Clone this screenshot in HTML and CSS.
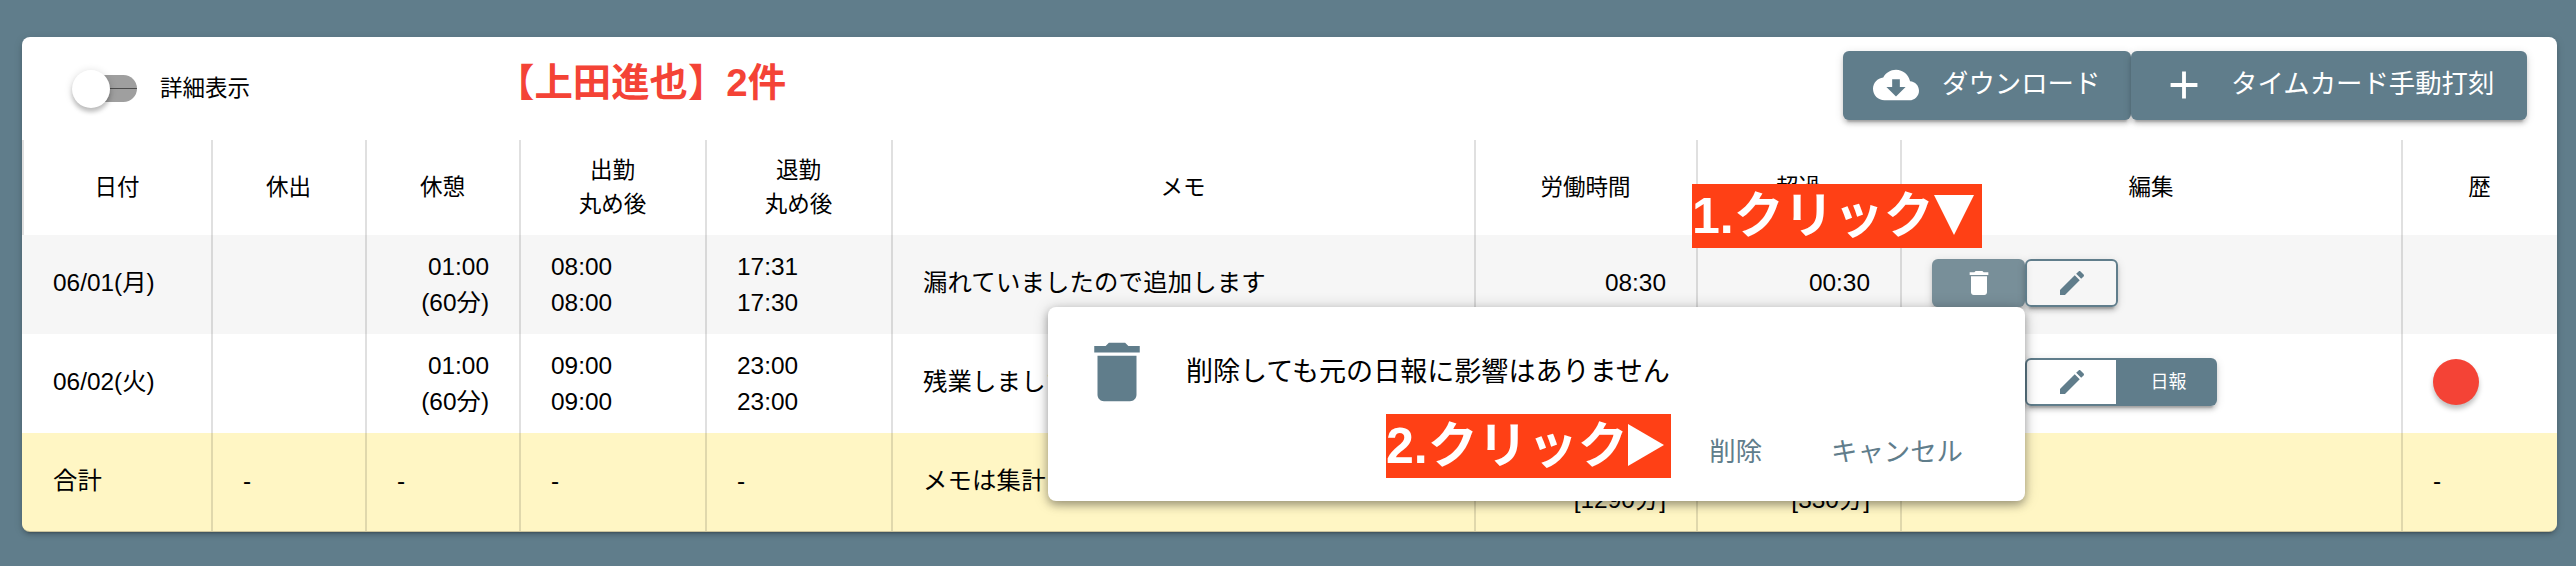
FILE: index.html
```html
<!DOCTYPE html>
<html lang="ja">
<head>
<meta charset="utf-8">
<title>タイムカード</title>
<link rel="stylesheet" href="styles.css">
</head>
<body>
<svg class="defs" width="0" height="0">
  <symbol id="trash" viewBox="0 0 24 24"><path d="M6 19c0 1.1.9 2 2 2h8c1.1 0 2-.9 2-2V7H6v12zM19 4h-3.5l-1-1h-5l-1 1H5v2h14V4z"/></symbol>
  <symbol id="edit" viewBox="0 0 24 24"><path d="M3 17.25V21h3.75L17.81 9.94l-3.75-3.75L3 17.25zM20.71 7.04c.39-.39.39-1.02 0-1.41l-2.34-2.34c-.39-.39-1.02-.39-1.41 0l-1.83 1.83 3.75 3.75 1.83-1.83z"/></symbol>
  <symbol id="cloud" viewBox="0 0 24 24"><path d="M19.35 10.04C18.67 6.59 15.64 4 12 4 9.11 4 6.6 5.64 5.35 8.04 2.34 8.36 0 10.91 0 14c0 3.31 2.69 6 6 6h13c2.76 0 5-2.24 5-5 0-2.64-2.05-4.78-4.65-4.96zM17 13l-5 5-5-5h3V9h4v4h3z"/></symbol>
  <symbol id="plus" viewBox="0 0 24 24"><path d="M19 13h-6v6h-2v-6H5v-2h6V5h2v6h6v2z"/></symbol>
</svg>
<main class="card">
  <header class="toolbar">
    <div class="switch"><span class="track"></span><span class="thumb"></span></div>
    <span class="switch-label">詳細表示</span>
    <h1 class="title">【上田進也】2件</h1>
    <div class="actions">
      <button class="btn download"><svg class="i-cloud"><use href="#cloud"/></svg><span>ダウンロード</span></button>
      <button class="btn punch"><svg class="i-plus"><use href="#plus"/></svg><span>タイムカード手動打刻</span></button>
    </div>
  </header>
  <section class="table">
    <div class="row head">
      <div>日付</div><div>休出</div><div>休憩</div><div>出勤<br>丸め後</div><div>退勤<br>丸め後</div><div>メモ</div><div>労働時間</div><div>超過</div><div>編集</div><div>歴</div>
    </div>
    <div class="row odd">
      <div>06/01(月)</div><div></div><div class="num two">01:00<br>(60分)</div><div class="two">08:00<br>08:00</div><div class="two">17:31<br>17:30</div><div class="memo">漏れていましたので追加します</div><div class="num">08:30</div><div class="num">00:30</div>
      <div class="edit"><button class="mini del"><svg><use href="#trash"/></svg></button><button class="mini pen"><svg><use href="#edit"/></svg></button></div><div></div>
    </div>
    <div class="row">
      <div>06/02(火)</div><div></div><div class="num two">01:00<br>(60分)</div><div class="two">09:00<br>09:00</div><div class="two">23:00<br>23:00</div><div class="memo">残業しました</div><div class="num">13:00</div><div class="num">05:00</div>
      <div class="edit"><button class="mini del"><svg><use href="#trash"/></svg></button><span class="pair"><button class="mini pen"><svg><use href="#edit"/></svg></button><button class="mini report">日報</button></span></div><div><span class="dot"></span></div>
    </div>
    <div class="row total">
      <div>合計</div><div>-</div><div>-</div><div>-</div><div>-</div><div class="memo">メモは集計</div><div class="num two">21:30<br>[1290分]</div><div class="num two">05:30<br>[330分]</div><div></div><div>-</div>
    </div>
  </section>
</main>
<div class="dialog">
  <div class="message"><svg><use href="#trash"/></svg><p>削除しても元の日報に影響はありません</p></div>
  <div class="choices"><button class="flat">削除</button><button class="flat">キャンセル</button></div>
</div>
<div class="callout first">1.クリック<svg viewBox="0 0 40 40"><path d="M0 0H40L20 40z"/></svg></div>
<div class="callout second">2.クリック<svg viewBox="0 0 36 42"><path d="M0 0L36 21L0 42z"/></svg></div>
</body>
</html>
```
FILE: styles.css
```css
* { box-sizing: border-box; }
body {
  margin: 0;
  height: 566px;
  padding: 37px 19px 0 22px;
  overflow: hidden;
  position: relative;
  background: #607d8b;
  color: #000;
  font: 24.4px/36px "Liberation Sans", "Noto Sans CJK JP", sans-serif;
}
button { font: inherit; border: 0; margin: 0; padding: 0; color: #fff; }
svg { fill: currentColor; display: block; }
.defs { position: absolute; }
.card {
  height: 494px;
  background: #fff;
  border-radius: 8px;
  box-shadow: 0 6px 2px -4px rgba(0,0,0,.2), 0 4px 4px rgba(0,0,0,.14), 0 2px 10px rgba(0,0,0,.12);
}
.toolbar { height: 103px; display: flex; align-items: center; padding-right: 30px; }
.switch { width: 65px; height: 38px; margin-left: 50px; display: grid; align-items: center; }
.track, .thumb { grid-area: 1 / 1; }
.track {
  justify-self: end;
  width: 56px; height: 27px;
  border-radius: 14px;
  background: linear-gradient(#9f9f9f 13px, #4c4c4c 13px, #4c4c4c 14px, #9f9f9f 14px);
}
.thumb {
  width: 38px; height: 38px;
  border-radius: 50%;
  background: #fff;
  box-shadow: 0 4px 4px rgba(0,0,0,.2), 0 1px 8px rgba(0,0,0,.14);
}
.switch-label { margin-left: 23px; font-size: 22.5px; }
.title { margin: -12px 0 0 246px; font-size: 38.4px; color: #f44336; white-space: nowrap; }
.actions { margin: -7px 0 0 auto; display: flex; }
.btn, .mini {
  background: #607d8b;
  border-radius: 6px;
  box-shadow: 0 6px 2px -4px rgba(0,0,0,.2), 0 4px 4px rgba(0,0,0,.14), 0 2px 10px rgba(0,0,0,.12);
}
.btn { height: 69px; display: flex; align-items: center; font-size: 26.4px; white-space: nowrap; }
.btn span { margin-top: -2px; }
.download { width: 288px; padding-left: 30px; gap: 23px; }
.punch { width: 396px; padding-left: 30px; gap: 24px; }
.i-cloud, .i-plus { width: 46px; height: 46px; }
.row {
  display: grid;
  grid-template-columns: 189px 154px 154px 186px 186px 583px 222px 204px 501px 156px;
  height: 99px;
}
.row > div {
  display: flex;
  align-items: center;
  padding: 0 30px 3px;
  border-left: 2px solid rgba(0,0,0,.12);
  white-space: nowrap;
}
.row > .two { padding-bottom: 0; }
.row > .memo { letter-spacing: .15px; }
.row:not(.head) > div:first-child { border-left-color: transparent; padding-left: 29px; }
.row > .num { justify-content: flex-end; text-align: right; }
.head { height: 95px; font-size: 22.5px; line-height: 34px; }
.row.head > div { justify-content: center; text-align: center; padding: 0 30px 0 29px; }
.odd { background: #f6f6f6; }
.total { background: #fff6c4; border-radius: 0 0 8px 8px; border-bottom: 1px solid rgba(0,0,0,.2); }
.mini { width: 93px; height: 48px; display: flex; align-items: center; justify-content: center; }
.mini svg { width: 32px; height: 32px; }
.del { background: #788f99; }
.pen { background: transparent; border: 2px solid #607d8b; color: #607d8b; }
.pair { display: flex; border-radius: 6px; box-shadow: 0 6px 2px -4px rgba(0,0,0,.2), 0 4px 4px rgba(0,0,0,.14), 0 2px 10px rgba(0,0,0,.12); }
.pair .mini { box-shadow: none; }
.pair .pen { border-radius: 6px 0 0 6px; background: #fff; }
.pair .report { width: 99px; border-radius: 0 6px 6px 0; font-size: 18px; padding-left: 2px; }
.dot { width: 46px; height: 46px; border-radius: 50%; background: #f44336; box-shadow: 0 4px 5px rgba(0,0,0,.25); }
.dialog {
  position: absolute;
  left: 1048px; top: 307px;
  width: 977px; height: 194px;
  background: #fff;
  border-radius: 8px;
  box-shadow: 0 4px 8px rgba(0,0,0,.3), 0 1px 16px rgba(0,0,0,.18);
}
.message { display: flex; align-items: center; height: 129px; padding-left: 30px; font-size: 27.05px; }
.message svg { width: 78px; height: 78px; color: #607d8b; }
.message p { margin: 0 0 0 30px; white-space: nowrap; }
.choices { display: flex; justify-content: flex-end; gap: 69px; padding-right: 62px; margin-top: -2px; }
.flat { background: none; color: #607d8b; font-size: 26.4px; }
.callout {
  position: absolute;
  display: flex;
  align-items: center;
  height: 64px;
  background: #ff4015;
  color: #fff;
  font-size: 50px;
  font-weight: 700;
  white-space: nowrap;
}
.first { left: 1692px; top: 184px; width: 290px; }
.second { left: 1386px; top: 414px; width: 285px; }
.first svg { width: 40px; height: 40px; margin-bottom: 3px; }
.second svg { width: 36px; height: 42px; margin-bottom: 3px; }
```
